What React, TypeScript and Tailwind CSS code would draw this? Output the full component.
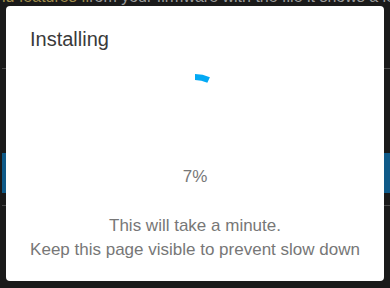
import React from "react";

export default function App() {
  const pct = 7;
  const r = 32;
  const c = 2 * Math.PI * r;
  return (
    <div className="relative w-[390px] h-[288px] overflow-hidden bg-[#1a1a1a] font-['Liberation_Sans',Arial,sans-serif]">
      {/* dimmed page behind the dialog */}
      <div className="ml-[2px] flex flex-col">
        <div className="h-[68px] overflow-hidden">
          <div className="-mt-[13px] whitespace-nowrap text-[16px] leading-[20px] text-[#a08c4a]">
            ld features fi<span className="text-[#9a9a9a]">rom your firmware with the file it shows a loaded</span>
          </div>
        </div>
        <div className="h-px bg-[#4a4a4a]" />
        <div className="h-[84px]" />
        <div className="h-[40px] bg-[#0f5a88]" />
        <div className="h-[12px]" />
        <div className="h-px bg-[#4a4a4a]" />
      </div>

      {/* dialog overlay */}
      <div className="absolute inset-0 flex p-[6px] pb-[7px]">
        <div className="flex-1 rounded-[4px] bg-white">
          <div className="px-[24px] pt-[21px] text-[20px] leading-[24px] text-[#3a3a3a]">
            Installing
          </div>
          <div className="flex flex-col items-center pt-[18px]">
            <svg width="80" height="80" viewBox="0 0 80 80">
              <circle
                cx="40"
                cy="40"
                r={r}
                fill="none"
                stroke="#03a9f4"
                strokeWidth="6"
                strokeDasharray={`${(c * pct) / 100} ${c}`}
                transform="rotate(-90 40 40)"
              />
            </svg>
            <div className="mt-[18px] text-[17px] leading-[20px] text-[#777777]">{pct}%</div>
            <div className="mt-[27px] text-center text-[17px] leading-[24px] text-[#777777]">
              <div>This will take a minute.</div>
              <div>Keep this page visible to prevent slow down</div>
            </div>
          </div>
        </div>
      </div>
    </div>
  );
}
